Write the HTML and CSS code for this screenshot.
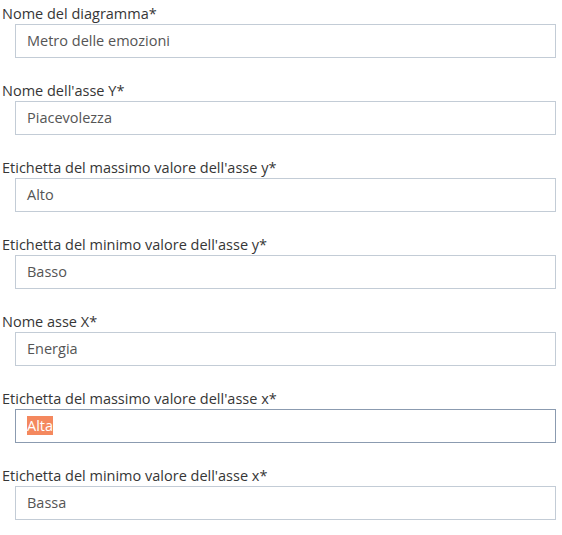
FILE: index.html
```html
<!DOCTYPE html>
<html lang="it">
<head>
<meta charset="utf-8">
<title>Diagramma</title>
<link rel="stylesheet" href="styles.css">
</head>
<body>
<form class="form">
  <div class="field">
    <label class="field-label">Nome del diagramma*</label>
    <div class="field-input">Metro delle emozioni</div>
  </div>
  <div class="field">
    <label class="field-label">Nome dell'asse Y*</label>
    <div class="field-input">Piacevolezza</div>
  </div>
  <div class="field">
    <label class="field-label">Etichetta del massimo valore dell'asse y*</label>
    <div class="field-input">Alto</div>
  </div>
  <div class="field">
    <label class="field-label">Etichetta del minimo valore dell'asse y*</label>
    <div class="field-input">Basso</div>
  </div>
  <div class="field">
    <label class="field-label">Nome asse X*</label>
    <div class="field-input">Energia</div>
  </div>
  <div class="field">
    <label class="field-label">Etichetta del massimo valore dell'asse x*</label>
    <div class="field-input field-input--focus"><span class="selected">Alta</span></div>
  </div>
  <div class="field">
    <label class="field-label">Etichetta del minimo valore dell'asse x*</label>
    <div class="field-input">Bassa</div>
  </div>
</form>
</body>
</html>
```

FILE: styles.css
```css
html, body {
  margin: 0;
  padding: 0;
  background: #ffffff;
}
body {
  font-family: "Open Sans", "DejaVu Sans", sans-serif;
  font-size: 14.5px;
  color: #333333;
}
.form {
  display: flex;
  flex-direction: column;
  gap: 23px;
  padding: 4px 6px 0 2px;
}
.field {
  display: flex;
  flex-direction: column;
}
.field-label {
  display: block;
  line-height: 20px;
  color: #363636;
}
.field-input {
  box-sizing: border-box;
  margin-left: 13px;
  height: 34px;
  border: 1px solid #c3ccd6;
  padding: 0 11px 2px;
  display: flex;
  align-items: center;
  color: #555555;
  background: #ffffff;
}
.field-input--focus {
  border-color: #8b9bb0;
}
.selected {
  background: #f4885e;
  color: #ffffff;
}
```
